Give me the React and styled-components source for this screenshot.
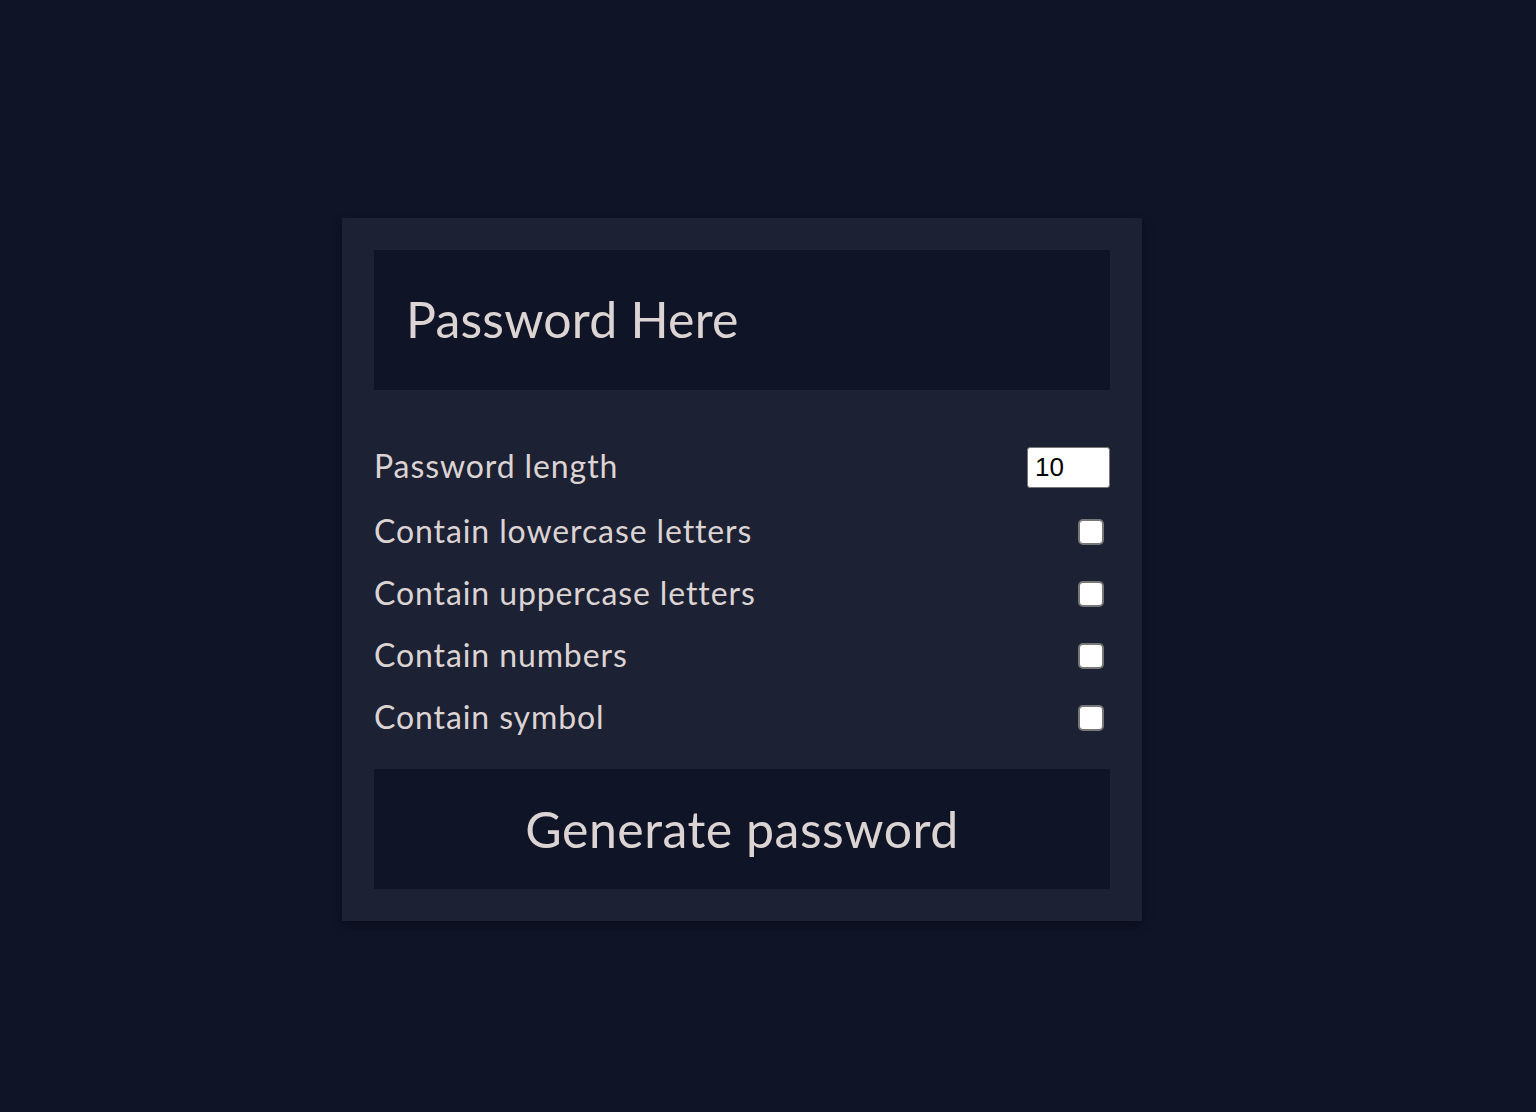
import React, { useState } from "react";
import styled, { createGlobalStyle } from "styled-components";

const GlobalStyle = createGlobalStyle`
  html, body {
    margin: 0;
    padding: 0;
    background: #0f1427;
  }
  body {
    font-family: 'Lato', 'Liberation Sans', sans-serif;
    color: #dcd3d3;
  }
`;

const Page = styled.div`
  min-height: 1112px;
  display: flex;
  justify-content: center;
  align-items: flex-start;
  padding: 218px 52px 0 0;
  box-sizing: border-box;
`;

const Card = styled.div`
  width: 800px;
  box-sizing: border-box;
  padding: 32px;
  background: #1c2134;
  box-shadow: 0 4px 10px rgba(0, 0, 0, 0.35);
  display: flex;
  flex-direction: column;
`;

const Display = styled.div`
  height: 140px;
  box-sizing: border-box;
  background: #0f1427;
  display: flex;
  align-items: center;
  padding: 0 32px 2px;
  font-size: 50px;
  letter-spacing: 0.2px;
`;

const Settings = styled.div`
  margin-top: 46px;
  display: flex;
  flex-direction: column;
`;

const Row = styled.label`
  height: 62px;
  display: flex;
  align-items: center;
  justify-content: space-between;
  font-size: 32px;
  letter-spacing: 0.9px;
  margin-bottom: ${(p) => (p.$first ? "3px" : "0")};

  & > span {
    position: relative;
    top: -2px;
  }
`;

const LengthInput = styled.input`
  width: 83px;
  height: 41px;
  box-sizing: border-box;
  border: 1px solid #777;
  border-radius: 3px;
  padding: 0 7px;
  font-family: 'Liberation Sans', Arial, sans-serif;
  font-size: 26px;
  letter-spacing: 0;
  color: #000;
  background: #fff;
  outline: none;
`;

const Check = styled.input`
  appearance: none;
  width: 26px;
  height: 26px;
  margin: 0 6px 0 0;
  border: 2px solid #777;
  border-radius: 5px;
  background: #fff;
  box-sizing: border-box;
`;

const GenerateButton = styled.button`
  margin-top: 20px;
  height: 120px;
  border: none;
  background: #0f1427;
  color: #dcd3d3;
  font-family: 'Lato', 'Liberation Sans', sans-serif;
  font-size: 50px;
  letter-spacing: 0.5px;
  cursor: pointer;
`;

const options = [
  "Contain lowercase letters",
  "Contain uppercase letters",
  "Contain numbers",
  "Contain symbol",
];

export default function App() {
  const [length, setLength] = useState(10);

  return (
    <>
      <GlobalStyle />
      <Page>
        <Card>
          <Display>Password Here</Display>
          <Settings>
            <Row $first>
              <span>Password length</span>
              <LengthInput
                type="text"
                value={length}
                onChange={(e) => setLength(e.target.value)}
              />
            </Row>
            {options.map((text) => (
              <Row key={text}>
                <span>{text}</span>
                <Check type="checkbox" />
              </Row>
            ))}
          </Settings>
          <GenerateButton>Generate password</GenerateButton>
        </Card>
      </Page>
    </>
  );
}
